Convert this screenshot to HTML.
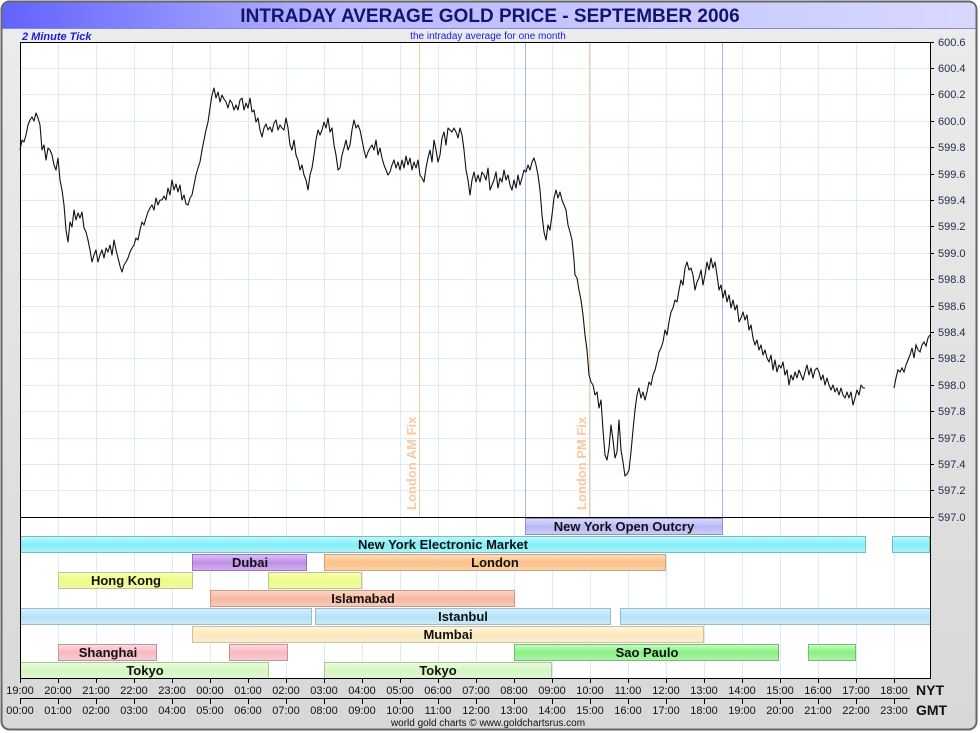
<!DOCTYPE html>
<html><head><meta charset="utf-8"><style>
html,body{margin:0;padding:0;background:#fff;}
svg{display:block;font-family:"Liberation Sans",sans-serif;}
</style></head><body>
<svg width="980" height="733" viewBox="0 0 980 733" xmlns="http://www.w3.org/2000/svg">
<defs>
<linearGradient id="tb" x1="0" x2="1" y1="0" y2="0"><stop offset="0" stop-color="#6262ff"/><stop offset="0.35" stop-color="#b8b8ff"/><stop offset="1" stop-color="#d8d8ff"/></linearGradient>
<linearGradient id="bg" x1="0" x2="0" y1="0" y2="1"><stop offset="0" stop-color="#ececec"/><stop offset="1" stop-color="#d8d8d8"/></linearGradient>
<linearGradient id="gcy" x1="0" x2="0" y1="0" y2="1"><stop offset="0" stop-color="#c4f6fa"/><stop offset="0.5" stop-color="#80f0fa"/><stop offset="1" stop-color="#b4f0f4"/></linearGradient>
<linearGradient id="gpu" x1="0" x2="0" y1="0" y2="1"><stop offset="0" stop-color="#dcc4f4"/><stop offset="0.5" stop-color="#c08ee8"/><stop offset="1" stop-color="#d0b0ee"/></linearGradient>
<linearGradient id="gor" x1="0" x2="0" y1="0" y2="1"><stop offset="0" stop-color="#fde0c0"/><stop offset="0.5" stop-color="#fcbf88"/><stop offset="1" stop-color="#f8d4b0"/></linearGradient>
<linearGradient id="gye" x1="0" x2="0" y1="0" y2="1"><stop offset="0" stop-color="#f8fcc4"/><stop offset="0.5" stop-color="#eefc80"/><stop offset="1" stop-color="#f0f8b8"/></linearGradient>
<linearGradient id="gsa" x1="0" x2="0" y1="0" y2="1"><stop offset="0" stop-color="#fcd8c8"/><stop offset="0.5" stop-color="#f8b8a0"/><stop offset="1" stop-color="#f4ccbc"/></linearGradient>
<linearGradient id="gbl" x1="0" x2="0" y1="0" y2="1"><stop offset="0" stop-color="#d8f0fc"/><stop offset="0.5" stop-color="#b4e4fa"/><stop offset="1" stop-color="#cce8f6"/></linearGradient>
<linearGradient id="gcr" x1="0" x2="0" y1="0" y2="1"><stop offset="0" stop-color="#fdf6e4"/><stop offset="0.5" stop-color="#fce8bc"/><stop offset="1" stop-color="#f8ecd4"/></linearGradient>
<linearGradient id="gpk" x1="0" x2="0" y1="0" y2="1"><stop offset="0" stop-color="#fcdce0"/><stop offset="0.5" stop-color="#f8b8c0"/><stop offset="1" stop-color="#f4d0d4"/></linearGradient>
<linearGradient id="ggr" x1="0" x2="0" y1="0" y2="1"><stop offset="0" stop-color="#c8fcc4"/><stop offset="0.5" stop-color="#88f080"/><stop offset="1" stop-color="#b4f0b0"/></linearGradient>
<linearGradient id="glg" x1="0" x2="0" y1="0" y2="1"><stop offset="0" stop-color="#ecfce0"/><stop offset="0.5" stop-color="#d4f8c0"/><stop offset="1" stop-color="#e4f4d8"/></linearGradient>
<linearGradient id="gla" x1="0" x2="0" y1="0" y2="1"><stop offset="0" stop-color="#dcdcfc"/><stop offset="0.5" stop-color="#b8b8fa"/><stop offset="1" stop-color="#ccccf4"/></linearGradient>
</defs>
<rect x="0" y="0" width="980" height="733" fill="#fff"/>
<rect x="1.5" y="1.5" width="975" height="728" rx="8" fill="url(#bg)" stroke="#666" stroke-width="2"/>
<path d="M2.5 28 V10 Q2.5 2.5 10 2.5 H968 Q975.5 2.5 975.5 10 V28 Z" fill="url(#tb)"/>
<line x1="2" y1="28.5" x2="976" y2="28.5" stroke="#8888cc"/>
<text x="490" y="22" text-anchor="middle" font-size="19" font-weight="bold" fill="#141470">INTRADAY AVERAGE GOLD PRICE - SEPTEMBER 2006</text>
<text x="22" y="40" font-size="11" font-weight="bold" font-style="italic" fill="#1a1ae0">2 Minute Tick</text>
<text x="488" y="39" text-anchor="middle" font-size="10" fill="#1a1ae0">the intraday average for one month</text>
<rect x="20" y="42" width="910" height="636" fill="#fff"/>
<g stroke="#dcecf6" stroke-width="1">
<path d="M58.5 42V678M96.5 42V678M134.5 42V678M172.5 42V678M210.5 42V678M248.5 42V678M286.5 42V678M324.5 42V678M362.5 42V678M400.5 42V678M438.5 42V678M476.5 42V678M514.5 42V678M552.5 42V678M590.5 42V678M628.5 42V678M666.5 42V678M704.5 42V678M742.5 42V678M780.5 42V678M818.5 42V678M856.5 42V678M894.5 42V678"/>
<path d="M20 68.5H930M20 94.5H930M20 121.5H930M20 147.5H930M20 174.5H930M20 200.5H930M20 226.5H930M20 253.5H930M20 279.5H930M20 306.5H930M20 332.5H930M20 358.5H930M20 385.5H930M20 411.5H930M20 438.5H930M20 464.5H930M20 490.5H930"/>
</g>
<line x1="419.5" y1="42" x2="419.5" y2="517" stroke="#f8c8a0"/>
<line x1="589.5" y1="42" x2="589.5" y2="517" stroke="#f8c8a0"/>
<line x1="525.5" y1="42" x2="525.5" y2="517" stroke="#b0b0f0"/>
<line x1="722.5" y1="42" x2="722.5" y2="517" stroke="#b0b0f0"/>
<text transform="translate(416,510) rotate(-90)" font-size="13" font-weight="bold" fill="#f8c8a0">London AM Fix</text>
<text transform="translate(586,510) rotate(-90)" font-size="13" font-weight="bold" fill="#f8c8a0">London PM Fix</text>
<polyline fill="none" stroke="#111" stroke-width="1.1" stroke-linejoin="round" points="20,150 22,140 24,142 26,135 28,125 30,120 32,117 34,121 36,113 38,118 40,125 42,150 44,145 46,160 48,148 50,150 52,155 54,165 56,170 58,158 60,180 62,190 64,205 66,230 68,242 70,222 72,227 74,210 76,220 78,213 80,218 82,212 84,228 86,232 88,240 90,250 92,262 94,255 96,250 98,262 100,255 102,250 104,258 106,248 108,252 110,245 112,255 114,240 116,250 118,258 120,266 122,272 124,265 126,262 128,258 130,252 132,248 134,245 136,238 138,240 140,230 142,222 144,225 146,218 148,212 150,208 152,205 154,210 156,198 158,205 160,200 162,200 164,196 166,200 168,188 170,195 172,180 174,190 176,184 178,192 180,185 182,200 184,195 186,204 188,205 190,198 192,195 194,185 196,175 198,168 200,162 202,150 204,140 206,130 208,122 210,108 212,95 214,88 216,98 218,92 220,102 222,95 224,99 226,102 228,108 230,100 232,103 234,110 236,105 238,110 240,100 242,98 244,110 246,103 248,108 250,98 252,112 254,110 256,122 258,118 260,130 262,137 264,128 266,124 268,130 270,127 272,132 274,123 276,120 278,130 280,125 282,128 284,130 286,118 288,128 290,145 292,150 294,140 296,155 298,160 300,170 302,165 304,175 306,180 308,190 310,175 312,168 314,155 316,140 318,130 320,135 322,130 324,122 326,128 328,118 330,132 332,128 334,145 336,155 338,170 340,168 342,155 344,148 346,140 348,150 350,145 352,130 354,120 356,128 358,125 360,130 362,140 364,150 366,158 368,152 370,148 372,145 374,150 376,140 378,155 380,148 382,158 384,165 386,170 388,175 390,172 392,165 394,160 396,168 398,162 400,170 402,160 404,168 406,156 408,165 410,158 412,170 414,162 416,168 418,160 420,175 422,178 424,182 426,168 428,158 430,150 432,162 434,140 436,150 438,162 440,155 442,138 444,132 446,145 448,128 450,130 452,132 454,128 456,132 458,138 460,128 462,135 464,150 466,170 468,180 470,195 472,180 474,172 476,182 478,175 480,182 482,172 484,175 486,180 488,168 490,190 492,185 494,180 496,172 498,188 500,178 502,182 504,170 506,180 508,175 510,185 512,190 514,180 516,188 518,175 520,185 522,178 524,170 526,172 528,165 530,170 532,162 534,158 536,165 538,175 540,190 542,215 544,232 546,240 548,225 550,230 552,215 554,198 556,190 558,198 560,192 562,200 564,205 566,210 568,225 570,232 572,240 574,260 575,275 577,278 579,290 581,300 583,315 585,335 587,350 589,375 591,382 593,385 595,395 597,392 599,408 601,400 603,430 605,455 607,460 609,448 611,425 613,440 615,458 617,452 619,420 621,450 623,462 625,476 627,474 629,470 631,452 633,430 635,410 637,395 639,388 641,398 643,392 645,400 647,392 649,382 651,385 653,375 655,370 657,362 659,352 661,348 663,342 665,330 667,335 669,322 671,312 673,308 675,300 677,302 679,290 681,280 683,285 685,268 687,262 689,270 691,268 693,275 695,290 697,282 699,278 701,270 703,285 705,275 707,262 709,270 711,258 713,268 715,262 717,275 719,290 721,285 723,298 725,290 727,302 729,295 731,308 733,300 735,310 737,305 739,322 741,318 743,312 745,320 747,315 749,330 751,325 753,338 755,345 757,340 759,350 761,345 763,355 765,350 767,358 769,362 771,355 773,370 775,360 777,372 779,365 781,368 783,362 785,375 787,370 789,385 791,375 793,380 795,372 797,378 799,370 801,375 803,380 805,372 807,365 809,375 811,368 813,378 815,370 817,368 819,372 821,380 823,375 825,385 827,378 829,385 831,390 833,385 835,392 837,388 839,395 841,388 843,395 845,398 847,392 849,398 851,392 853,405 855,398 857,390 859,395 861,385 863,388 865,388"/>
<polyline fill="none" stroke="#111" stroke-width="1.1" points="894,388 896,378 898,370 900,372 902,368 904,372 906,365 908,360 910,355 912,348 914,358 916,345 918,350 920,352 922,345 924,342 926,346 928,338 930,335"/>
<g stroke-width="1">
<rect x="525.5" y="518.5" width="197" height="16" fill="url(#gla)" stroke="#9090c0"/>
<rect x="20.5" y="536.5" width="845" height="16" fill="url(#gcy)" stroke="#70c0c8"/>
<rect x="892.5" y="536.5" width="37" height="16" fill="url(#gcy)" stroke="#70c0c8"/>
<rect x="192.5" y="554.5" width="114" height="16" fill="url(#gpu)" stroke="#a070c0"/>
<rect x="324.5" y="554.5" width="341" height="16" fill="url(#gor)" stroke="#d8a070"/>
<rect x="58.5" y="572.5" width="134" height="16" fill="url(#gye)" stroke="#c0c880"/>
<rect x="268.5" y="572.5" width="93" height="16" fill="url(#gye)" stroke="#c0c880"/>
<rect x="210.5" y="590.5" width="304" height="16" fill="url(#gsa)" stroke="#d09880"/>
<rect x="20.5" y="608.5" width="291" height="16" fill="url(#gbl)" stroke="#98bccc"/>
<rect x="315.5" y="608.5" width="295" height="16" fill="url(#gbl)" stroke="#98bccc"/>
<rect x="620.5" y="608.5" width="310" height="16" fill="url(#gbl)" stroke="#98bccc"/>
<rect x="192.5" y="626.5" width="511" height="16" fill="url(#gcr)" stroke="#d0c098"/>
<rect x="58.5" y="644.5" width="98" height="16" fill="url(#gpk)" stroke="#c89098"/>
<rect x="229.5" y="644.5" width="58" height="16" fill="url(#gpk)" stroke="#c89098"/>
<rect x="514.5" y="644.5" width="264" height="16" fill="url(#ggr)" stroke="#70c070"/>
<rect x="808.5" y="644.5" width="47" height="16" fill="url(#ggr)" stroke="#70c070"/>
<rect x="20.5" y="662.5" width="248" height="16" fill="url(#glg)" stroke="#a8c898"/>
<rect x="324.5" y="662.5" width="227" height="16" fill="url(#glg)" stroke="#a8c898"/>
</g>
<g font-size="13" font-weight="bold" fill="#111" text-anchor="middle">
<text x="624" y="531">New York Open Outcry</text>
<text x="443" y="549">New York Electronic Market</text>
<text x="250" y="567">Dubai</text>
<text x="495" y="567">London</text>
<text x="126" y="585">Hong Kong</text>
<text x="363" y="603">Islamabad</text>
<text x="463" y="621">Istanbul</text>
<text x="448" y="639">Mumbai</text>
<text x="108" y="657">Shanghai</text>
<text x="647" y="657">Sao Paulo</text>
<text x="145" y="675">Tokyo</text>
<text x="438" y="675">Tokyo</text>
</g>
<g stroke="#000" fill="none" stroke-width="1">
<path d="M20.5 42V678.5H930.5V42.5H20.5"/>
<path d="M20 517.5H934"/>
<path d="M20 698.5H910"/>
<path d="M930 42.5h4M930 68.5h4M930 94.5h4M930 121.5h4M930 147.5h4M930 174.5h4M930 200.5h4M930 226.5h4M930 253.5h4M930 279.5h4M930 306.5h4M930 332.5h4M930 358.5h4M930 385.5h4M930 411.5h4M930 438.5h4M930 464.5h4M930 490.5h4"/>
<path d="M20.5 678v5M58.5 678v5M96.5 678v5M134.5 678v5M172.5 678v5M210.5 678v5M248.5 678v5M286.5 678v5M324.5 678v5M362.5 678v5M400.5 678v5M438.5 678v5M476.5 678v5M514.5 678v5M552.5 678v5M590.5 678v5M628.5 678v5M666.5 678v5M704.5 678v5M742.5 678v5M780.5 678v5M818.5 678v5M856.5 678v5M894.5 678v5"/>
<path d="M20.5 698v6M58.5 698v6M96.5 698v6M134.5 698v6M172.5 698v6M210.5 698v6M248.5 698v6M286.5 698v6M324.5 698v6M362.5 698v6M400.5 698v6M438.5 698v6M476.5 698v6M514.5 698v6M552.5 698v6M590.5 698v6M628.5 698v6M666.5 698v6M704.5 698v6M742.5 698v6M780.5 698v6M818.5 698v6M856.5 698v6M894.5 698v6"/>
</g>
<g font-size="11" fill="#1a2a50">
<text x="938" y="46">600.6</text><text x="938" y="72">600.4</text><text x="938" y="98">600.2</text><text x="938" y="125">600.0</text><text x="938" y="151">599.8</text><text x="938" y="178">599.6</text><text x="938" y="204">599.4</text><text x="938" y="230">599.2</text><text x="938" y="257">599.0</text><text x="938" y="283">598.8</text><text x="938" y="310">598.6</text><text x="938" y="336">598.4</text><text x="938" y="362">598.2</text><text x="938" y="389">598.0</text><text x="938" y="415">597.8</text><text x="938" y="442">597.6</text><text x="938" y="468">597.4</text><text x="938" y="494">597.2</text><text x="938" y="521">597.0</text>
</g>
<g font-size="11" fill="#111" text-anchor="middle">
<text x="20" y="694">19:00</text><text x="58" y="694">20:00</text><text x="96" y="694">21:00</text><text x="134" y="694">22:00</text><text x="172" y="694">23:00</text><text x="210" y="694">00:00</text><text x="248" y="694">01:00</text><text x="286" y="694">02:00</text><text x="324" y="694">03:00</text><text x="362" y="694">04:00</text><text x="400" y="694">05:00</text><text x="438" y="694">06:00</text><text x="476" y="694">07:00</text><text x="514" y="694">08:00</text><text x="552" y="694">09:00</text><text x="590" y="694">10:00</text><text x="628" y="694">11:00</text><text x="666" y="694">12:00</text><text x="704" y="694">13:00</text><text x="742" y="694">14:00</text><text x="780" y="694">15:00</text><text x="818" y="694">16:00</text><text x="856" y="694">17:00</text><text x="894" y="694">18:00</text>
<text x="20" y="714">00:00</text><text x="58" y="714">01:00</text><text x="96" y="714">02:00</text><text x="134" y="714">03:00</text><text x="172" y="714">04:00</text><text x="210" y="714">05:00</text><text x="248" y="714">06:00</text><text x="286" y="714">07:00</text><text x="324" y="714">08:00</text><text x="362" y="714">09:00</text><text x="400" y="714">10:00</text><text x="438" y="714">11:00</text><text x="476" y="714">12:00</text><text x="514" y="714">13:00</text><text x="552" y="714">14:00</text><text x="590" y="714">15:00</text><text x="628" y="714">16:00</text><text x="666" y="714">17:00</text><text x="704" y="714">18:00</text><text x="742" y="714">19:00</text><text x="780" y="714">20:00</text><text x="818" y="714">21:00</text><text x="856" y="714">22:00</text><text x="894" y="714">23:00</text>
</g>
<text x="916" y="695" font-size="14" font-weight="bold" fill="#111">NYT</text>
<text x="916" y="715" font-size="14" font-weight="bold" fill="#111">GMT</text>
<text x="488" y="726" text-anchor="middle" font-size="10" fill="#111">world gold charts © www.goldchartsrus.com</text>
</svg>
</body></html>
